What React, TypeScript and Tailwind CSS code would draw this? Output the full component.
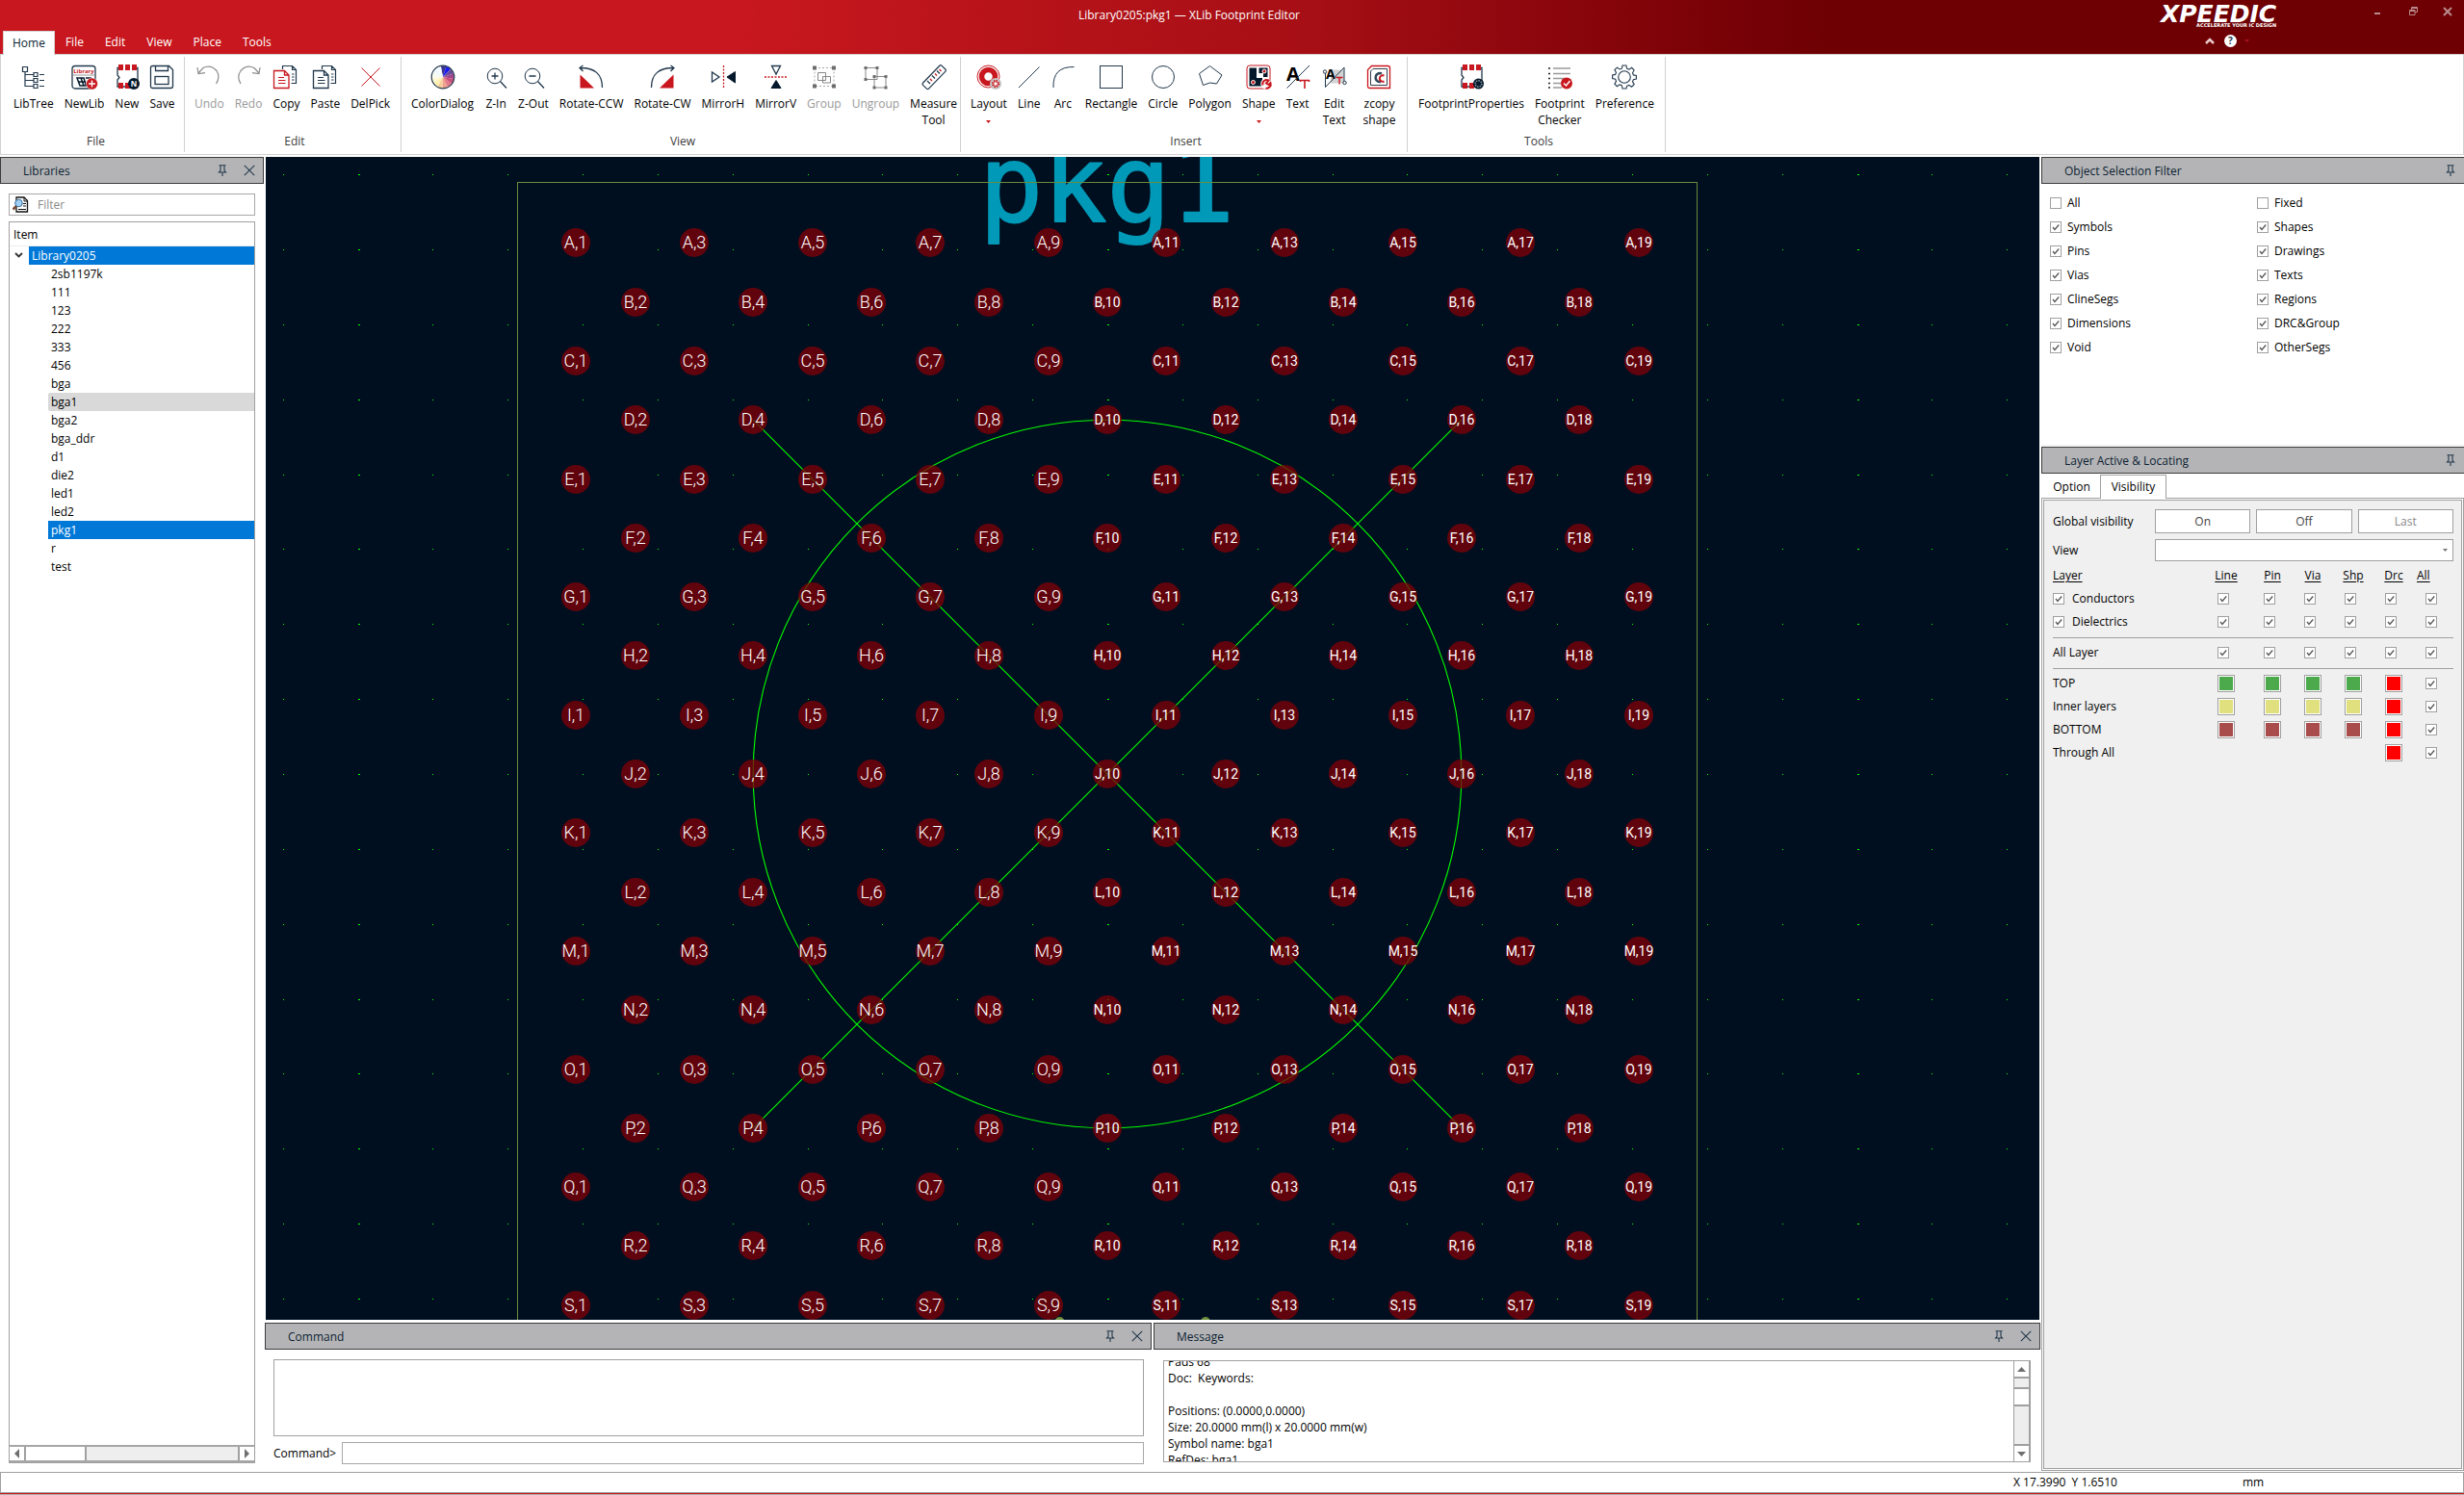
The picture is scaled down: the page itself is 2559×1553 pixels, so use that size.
import { useState } from 'react';
import type { ReactNode } from 'react';
import { clsx } from 'clsx';

const NAVY = '#22384c';
const DARK = '#04182b';
const RED = '#c8171e';

function Icon({ children }: { children: ReactNode }) {
  return (
    <svg viewBox="0 0 24 24" className="size-6 shrink-0 overflow-visible" fill="none" stroke={NAVY} strokeWidth="1">
      {children}
    </svg>
  );
}

function ChipBody() {
  return (
    <>
      <path d="M4 2.500H2V10l2 2.500-2 2.500V22h18M20 2.500h3V18" strokeWidth="1.300" />
      <g fill={RED} stroke="none">
        <rect x="3" y="-1" width="5" height="6" />
        <rect x="10" y="-1" width="5" height="6" />
        <rect x="17" y="-1" width="5" height="6" />
        <rect x="3" y="18" width="5" height="6" />
        <rect x="10" y="18" width="5" height="6" />
      </g>
    </>
  );
}

function CopyPages({ front }: { front: string }) {
  return (
    <>
      <path d="M8.500 4V.5h10l4 4v14h-5M18.500.5v4h4M18 9h2.500M18 12h2.500M18 15h2.500" strokeWidth="1.200" />
      <path d="M-.5 5.500h11l4.500 4.500v13.500H-.5ZM10.500 5.500V10H15" fill="#fff" stroke={front} strokeWidth="1.300" />
      <path d="M4 12.500h6M4 15.500h7.500M4 18.500h7.500" stroke={front} strokeWidth="1.200" />
    </>
  );
}

const wheel = ['#3b3590', '#1b1bf0', '#6a4b9c', '#a0468c', '#c84f7c', '#e07888', '#f0a08c', '#f6cf9c', '#fbeeb0', '#fdf8d0', '#f8faf0', '#f0f8fa', '#f4f8ff'];

function ColorWheel() {
  const step = (2 * Math.PI) / wheel.length;
  const at = (a: number) => `${12 + 11.5 * Math.sin(a)} ${12 - 11.5 * Math.cos(a)}`;
  return (
    <Icon>
      {wheel.map((color, i) => (
        <path
          key={color}
          d={`M12 12L${at((i - 0.4) * step)}A11.5 11.5 0 0 1 ${at((i + 0.6) * step)}Z`}
          fill={color}
          stroke="none"
        />
      ))}
      <circle cx="12" cy="12" r="11.8" strokeWidth="1.2" />
    </Icon>
  );
}

const icons: Record<string, ReactNode> = {
  LibTree: (
    <Icon>
      <path d="M.5 1.500h5v5h-5zM3 6.500V21.500h9M3 9.500h9M3 15.500h9M18 9.500h5M18 15.500h5M18 21.500h5" strokeWidth="1.200" />
      <path d="M12 7.500h4v4h-4zM12 13.500h4v4h-4zM12 19.500h4v4h-4z" fill="#fff" strokeWidth="1.200" />
    </Icon>
  ),
  NewLib: (
    <Icon>
      <rect x="0" y="0.500" width="24" height="23.500" rx="3" strokeWidth="1.300" />
      <text x="12" y="8" textAnchor="middle" fill={RED} stroke="none" className="font-['Open_Sans'] text-[6px] font-bold">
        Library
      </text>
      <path d="M.5 10h23" stroke="#999" />
      <path d="M5 13h7l2.500 8H8zM9 13l3 8M6 17h8M14 13h5v4" stroke={DARK} strokeWidth="1.500" />
      <circle cx="20.500" cy="19" r="6" fill={RED} stroke="#fff" strokeWidth=".5" />
      <path d="M17 19h7M20.500 15.500v7" stroke="#fff" strokeWidth="1.400" />
    </Icon>
  ),
  New: (
    <Icon>
      <ChipBody />
      <circle cx="19" cy="19" r="6" fill={DARK} stroke="none" />
      <text x="19" y="22" textAnchor="middle" fill="#fff" stroke="none" className="font-['Open_Sans'] text-[8px] font-bold">
        N
      </text>
    </Icon>
  ),
  Save: (
    <Icon>
      <path d="M2.500.5h17l4 4v17q0 2-2 2h-19q-2 0-2-2v-19q0-2 2-2zM5.500.5v5h13v-5" strokeWidth="1.300" />
      <rect x="5" y="11.500" width="14" height="8" strokeWidth="1.300" />
    </Icon>
  ),
  Undo: (
    <Icon>
      <path d="M19.500 19Q24 12 20 5.500 14-1.500 6 2.500L1 8M0 2l1 6.500 7-.8" stroke="#8d8d8d" strokeWidth="1.200" />
    </Icon>
  ),
  Redo: (
    <Icon>
      <path d="M4 19Q-.5 12 4 5.500 10-1.500 18 2.500l5 5.500M24 2l-1 6.500-7-.8" stroke="#8d8d8d" strokeWidth="1.200" />
    </Icon>
  ),
  Copy: (
    <Icon>
      <CopyPages front={RED} />
    </Icon>
  ),
  Paste: (
    <Icon>
      <CopyPages front={NAVY} />
    </Icon>
  ),
  DelPick: (
    <Icon>
      <path d="M2.500 2.500l19 19M21.500 2.500l-19 19" stroke={RED} />
    </Icon>
  ),
  ColorDialog: <ColorWheel />,
  'Z-In': (
    <Icon>
      <circle cx="11" cy="11" r="7.800" />
      <path d="M7.500 11h7M11 7.500v7M16.500 16.500l6.500 7" strokeWidth="1.300" />
    </Icon>
  ),
  'Z-Out': (
    <Icon>
      <circle cx="11" cy="11" r="7.800" />
      <path d="M7.500 11h7M16.500 16.500l6.500 7" strokeWidth="1.300" />
    </Icon>
  ),
  'Rotate-CCW': (
    <Icon>
      <path d="M0 2.500Q23.500 2 23.500 23M3.500 0L0 2.500 3.500 6" strokeWidth="1.300" />
      <path d="M.5 9.500V23.500H15z" fill={RED} stroke="none" />
    </Icon>
  ),
  'Rotate-CW': (
    <Icon>
      <path d="M24 2.500Q.5 2 .5 23M20.500 0L24 2.500 20.500 6" strokeWidth="1.300" />
      <path d="M23.500 9.500V23.500H9z" fill={RED} stroke="none" />
    </Icon>
  ),
  MirrorH: (
    <Icon>
      <path d="M12.500 0v24" stroke={RED} strokeDasharray="2 1.500" strokeWidth="1.300" />
      <path d="M.5 7v10L8 12z" strokeWidth="1.300" />
      <path d="M24.500 6.500v11.500L16 12z" fill={DARK} stroke={DARK} />
    </Icon>
  ),
  MirrorV: (
    <Icon>
      <path d="M0 12h24" stroke={RED} strokeDasharray="2 1.500" strokeWidth="1.300" />
      <path d="M7.500.5h9L12 9z" strokeWidth="1.300" />
      <path d="M7 23.500h10L12 15.500z" fill={DARK} stroke={DARK} />
    </Icon>
  ),
  Group: (
    <Icon>
      <path d="M2 2.500h20v19H2z" stroke="#a8a8a8" strokeDasharray="2 2" />
      <path d="M5.500 7.500h8v8h-8zM10.500 11.500h8v6.500h-8z" stroke="#888" />
      <path d="M0 .5h4v4H0zM20 .5h4v4h-4zM0 19.500h4v4H0zM20 19.500h4v4h-4z" fill="#6d6d6d" stroke="none" />
    </Icon>
  ),
  Ungroup: (
    <Icon>
      <path d="M2 2.500h12v12H2zM11 11.500h12v11.500H11z" stroke="#888" />
      <path d="M.5 1h3v3h-3zM12.500 1h3v3h-3zM.5 13h3v3h-3zM9.500 10h3v3h-3zM21.500 10h3v3h-3zM9.500 21.500h3v3h-3zM21.500 21.500h3v3h-3z" fill="#6d6d6d" stroke="none" />
    </Icon>
  ),
  'Measure Tool': (
    <Icon>
      <rect x="-2" y="8" width="28" height="8.500" rx="1.500" transform="rotate(-46 12 12)" strokeWidth="1.200" />
      <path d="M5 16l3 3M10 10.500l3 3M15 5.500l3 3" strokeWidth="1.300" />
      <path d="M8 14l2 2M13 8.500l2 2M17.500 4l2 2" stroke={RED} strokeWidth="1.300" />
    </Icon>
  ),
  Layout: (
    <Icon>
      <circle cx="11.500" cy="11.500" r="11.500" stroke={RED} />
      <circle cx="11.500" cy="11.500" r="7" stroke={RED} strokeWidth="5.500" />
      <circle cx="19" cy="19" r="6" fill="#c4c4c4" stroke="none" />
      <circle cx="19" cy="19" r="3.300" fill="#fff" stroke={RED} strokeWidth="1.500" strokeDasharray="1.600 1" />
      <circle cx="19" cy="19" r="2.300" stroke={RED} />
    </Icon>
  ),
  Line: (
    <Icon>
      <path d="M1 23L22.500 1.500" />
    </Icon>
  ),
  Arc: (
    <Icon>
      <path d="M2 23Q1 1 23.500 1.500" />
    </Icon>
  ),
  Rectangle: (
    <Icon>
      <rect x=".5" y=".5" width="23" height="23" />
    </Icon>
  ),
  Circle: (
    <Icon>
      <circle cx="12" cy="12" r="11.500" />
    </Icon>
  ),
  Polygon: (
    <Icon>
      <path d="M11.500.5L24 10l-5.500 9-7-1-7 2.500L.5 8.500z" />
    </Icon>
  ),
  Shape: (
    <Icon>
      <rect x="0" y="0" width="24" height="24" rx="3" stroke={RED} />
      <path d="M2.500 2.500H10V13h6v8.500H2.500zM12.500 2.500h9V12H17V8h-4.500z" fill={DARK} stroke="none" />
      <circle cx="6.500" cy="17.500" r="2" fill={RED} stroke="#fff" />
      <circle cx="18" cy="6" r="2" fill={RED} stroke="#fff" />
      <circle cx="20" cy="19" r="5.800" fill="#fff" stroke="none" />
      <path d="M16.500 20.500a4.200 4.200 0 0 1 6-5l-2.500 3 2.500 1.500 2-2a4.200 4.200 0 0 1-5 5.500" stroke={RED} strokeWidth="2" />
    </Icon>
  ),
  Text: (
    <Icon>
      <text x="0" y="16" fill="#000" stroke="none" className="font-['Open_Sans'] text-[20px] font-bold">
        A
      </text>
      <path d="M.5 23.500L24 0" />
      <path d="M14 15.500h10M19 15.500v8.500M14.500 15v2M23.500 15v2" stroke={RED} strokeWidth="1.600" />
    </Icon>
  ),
  'Edit Text': (
    <Icon>
      <path d="M8 4.500h14v14H8z" fill="#d2d2d2" stroke="none" />
      <text x="3" y="14" fill="#000" stroke="none" className="font-['Open_Sans'] text-[14px] font-bold">
        A
      </text>
      <path d="M2.500 8v14.500L22 2v15" />
      <path d="M13.500 12.500h7M17 12.500v7" stroke={RED} strokeWidth="1.400" />
      <circle cx="2" cy="6.500" r="1.700" fill="#fff" />
      <circle cx="22.500" cy="18" r="1.700" fill="#fff" />
    </Icon>
  ),
  'zcopy shape': (
    <Icon>
      <path d="M4.500.5h17q2 0 2 2v21H2.500q-2 0-2-2V4.500z" stroke={RED} strokeWidth="1.300" />
      <path d="M6 3.500h14.500v17H3.500V6z" stroke="#333f4c" />
      <path d="M15 8.500a4.500 4.500 0 1 0-1 8.500" stroke="#33475a" strokeWidth="2.500" />
      <path d="M17.500 10.500a3.300 3.300 0 1 0 0 6" stroke={RED} strokeWidth="2" />
    </Icon>
  ),
  FootprintProperties: (
    <Icon>
      <ChipBody />
      <circle cx="19.500" cy="19" r="5.500" fill={DARK} stroke="none" />
      <circle cx="19.500" cy="19" r="3.300" stroke="#8c99a5" strokeWidth="1.500" strokeDasharray="1.500 1" />
    </Icon>
  ),
  'Footprint Checker': (
    <Icon>
      <path d="M0 3h2M0 8.500h2M0 13.500h2M0 18.500h2M0 23h2" stroke="#222" strokeWidth="1.500" />
      <path d="M5 3h18M5 8.500h18M5 13.500h12M5 18.500h8M5 23h9" stroke="#9a9a9a" strokeWidth="1.500" />
      <circle cx="19" cy="18.500" r="6" fill={RED} stroke="none" />
      <path d="M16 18.500l2.500 2.500 4-5" stroke="#fff" strokeWidth="1.500" />
    </Icon>
  ),
  Preference: (
    <Icon>
      <circle cx="12" cy="12" r="6.300" strokeWidth="1.100" />
      <path d="M10 0h4l.6 3.200 2.200.9L19.600 2.300l2.500 2.600-1.600 2.800.9 2.200 3 .6v3.500l-3 .7-.9 2.200 1.700 2.700-2.700 2.600-2.700-1.800-2.200.9L14 24h-4l-.6-3.200-2.200-.9-2.800 1.800-2.500-2.600 1.600-2.700-.9-2.200-3-.7V10l3-.6.9-2.200L1.900 4.500l2.500-2.400 2.800 1.900 2.200-.8z" strokeWidth="1.100" />
    </Icon>
  ),
};

interface Tool {
  name: string;
  disabled?: boolean;
  menu?: boolean;
  wide?: boolean;
}

const ribbon: { title: string; width: string; tools: Tool[] }[] = [
  {
    title: 'File',
    width: 'w-[191px] pl-[7px]',
    tools: [{ name: 'LibTree' }, { name: 'NewLib' }, { name: 'New' }, { name: 'Save' }],
  },
  {
    title: 'Edit',
    width: 'w-[225px] pl-1',
    tools: [
      { name: 'Undo', disabled: true },
      { name: 'Redo', disabled: true },
      { name: 'Copy' },
      { name: 'Paste' },
      { name: 'DelPick' },
    ],
  },
  {
    title: 'View',
    width: 'w-[581px] pl-1',
    tools: [
      { name: 'ColorDialog' },
      { name: 'Z-In' },
      { name: 'Z-Out' },
      { name: 'Rotate-CCW' },
      { name: 'Rotate-CW' },
      { name: 'MirrorH' },
      { name: 'MirrorV' },
      { name: 'Group', disabled: true },
      { name: 'Ungroup', disabled: true },
      { name: 'Measure Tool' },
    ],
  },
  {
    title: 'Insert',
    width: 'w-[464px] pl-1',
    tools: [
      { name: 'Layout', menu: true },
      { name: 'Line' },
      { name: 'Arc' },
      { name: 'Rectangle' },
      { name: 'Circle' },
      { name: 'Polygon' },
      { name: 'Shape', menu: true },
      { name: 'Text' },
      { name: 'Edit Text', wide: true },
      { name: 'zcopy shape', wide: true },
    ],
  },
  {
    title: 'Tools',
    width: 'w-[268px] pl-[5px]',
    tools: [{ name: 'FootprintProperties' }, { name: 'Footprint Checker' }, { name: 'Preference' }],
  },
];

const libraryItems = [
  '2sb1197k', '111', '123', '222', '333', '456', 'bga', 'bga1', 'bga2', 'bga_ddr',
  'd1', 'die2', 'led1', 'led2', 'pkg1', 'r', 'test',
];

const filters = [
  ['All', 'Fixed'],
  ['Symbols', 'Shapes'],
  ['Pins', 'Drawings'],
  ['Vias', 'Texts'],
  ['ClineSegs', 'Regions'],
  ['Dimensions', 'DRC&Group'],
  ['Void', 'OtherSegs'],
];

const layerColumns = ['Line', 'Pin', 'Via', 'Shp', 'Drc'];

const layers = [
  { name: 'TOP', color: 'bg-[#4caa4c]' },
  { name: 'Inner layers', color: 'bg-[#e0e07e]' },
  { name: 'BOTTOM', color: 'bg-[#a84c4c]' },
  { name: 'Through All', color: null },
];

function CheckBox({ id, label, checked = true }: { id?: string; label?: string; checked?: boolean }) {
  return (
    <span className="relative inline-flex size-3 shrink-0 align-middle">
      <input
        id={id}
        type="checkbox"
        aria-label={label}
        defaultChecked={checked}
        className="peer size-3 appearance-none border border-[#a0a0a0] bg-white"
      />
      <svg viewBox="0 0 12 12" className="pointer-events-none absolute inset-0 hidden size-3 peer-checked:block">
        <path d="M3 6l2 2.500L9.200 3.500" fill="none" stroke="#555" strokeWidth="1.300" />
      </svg>
    </span>
  );
}

function DockHeader({ title, closable = false, flush = false }: { title: string; closable?: boolean; flush?: boolean }) {
  return (
    <div
      className={clsx(
        'flex h-7 shrink-0 items-center border border-[#3c3c3c] bg-[#b4b4b6] pr-2 pl-[23px] text-[#0c1f33]',
        flush && 'border-r-0',
      )}
    >
      <h2 className="flex-1 pt-0.5">{title}</h2>
      <div className="flex items-center gap-4">
        <button type="button" aria-label={`Pin ${title}`}>
          <svg viewBox="0 0 12 12" className="size-3" fill="none" stroke={NAVY} strokeWidth="1.100">
            <path d="M2.500.8h7M4 1v5.500M8 1v5.500M4 6.500L2.500 8h7L8 6.500M6 8v4" />
          </svg>
        </button>
        {closable && (
          <button type="button" aria-label={`Close ${title}`}>
            <svg viewBox="0 0 12 12" className="size-3" fill="none" stroke={NAVY} strokeWidth="1.100">
              <path d="M.8.8l10.400 10.400M11.200.8L.8 11.200" />
            </svg>
          </button>
        )}
      </div>
    </div>
  );
}

function TitleBar() {
  return (
    <header className="h-14 shrink-0 bg-linear-to-r from-[#c8171e] from-30% via-[#a60f15] via-53% to-[#6e0004] to-74% text-white">
      <div className="grid h-8 grid-cols-[226px_1fr_315px]">
        <div />
        <h1 className="text-center leading-8">Library0205:pkg1 — XLib Footprint Editor</h1>
        <div className="flex items-start justify-between pr-3">
          <div className="flex flex-col items-end font-['DejaVu_Sans'] font-bold">
            <span className="-mb-1.5 text-[25px] leading-[29px] italic">XPEEDIC</span>
            <span className="text-[5px] leading-[6px]">ACCELERATE YOUR IC DESIGN</span>
          </div>
          <div className="flex gap-[26px] pt-[7px] text-[#b98a8c]">
            <button type="button" aria-label="Minimize">
              <svg viewBox="0 0 10 10" className="size-[10px]"><path d="M1 6h6v2H1z" fill="currentColor" /></svg>
            </button>
            <button type="button" aria-label="Restore">
              <svg viewBox="0 0 10 10" className="size-[10px]" fill="none" stroke="currentColor">
                <path d="M3.500 3V.5h6v5H7M3 1.500h7M1.500 3.500h5.500v5h-5.500zM1 4.500h6" />
              </svg>
            </button>
            <button type="button" aria-label="Close">
              <svg viewBox="0 0 10 10" className="size-[10px]"><path d="M1 1l8 8M9 1L1 9" stroke="currentColor" strokeWidth="2" /></svg>
            </button>
          </div>
        </div>
      </div>
      <div className="flex h-6 items-start justify-between">
        <nav className="flex pl-[3px]">
          {['Home', 'File', 'Edit', 'View', 'Place', 'Tools'].map((tab) => (
            <button
              key={tab}
              type="button"
              className={clsx(
                'relative',
                tab === 'Home' ? 'h-[25px] border border-b-0 border-[#d4d4d4] bg-white px-[9px] text-[#0c1f33]' : 'h-6 px-[11px]',
              )}
            >
              {tab}
            </button>
          ))}
        </nav>
        <div className="flex items-center gap-2 pt-1 pr-[223px]">
          <button type="button" aria-label="Collapse ribbon" className="pr-0.5">
            <svg viewBox="0 0 10 8" className="h-2 w-[10px]">
              <path d="M1 6l4-4 4 4" fill="none" stroke="#e8c8c8" strokeWidth="2.500" />
            </svg>
          </button>
          <button type="button" aria-label="Help" className="size-[13px] rounded-full bg-white text-[10px] leading-[13px] font-bold text-[#22384c]">
            ?
          </button>
          <svg viewBox="0 0 5 3" className="h-[3px] w-[5px]"><path d="M0 0h5L2.500 3z" fill="#a8121a" /></svg>
        </div>
      </div>
    </header>
  );
}

function Ribbon() {
  return (
    <div className="flex h-[105px] shrink-0 border border-[#d0d0d0] bg-white">
      {ribbon.map((group) => (
        <section key={group.title} className={clsx('my-0.5 flex shrink-0 flex-col border-r border-[#d0d0d0]', group.width)}>
          <div className="flex flex-1 items-start pt-[9px]">
            {group.tools.map((tool) => {
              const words = tool.name.split(' ');
              return (
                <button
                  key={tool.name}
                  type="button"
                  disabled={tool.disabled}
                  className={clsx(
                    'flex shrink-0 flex-col items-center leading-[17px] text-black disabled:text-[#999]',
                    tool.wide ? 'px-[9px]' : 'pr-[5px] pl-[6px]',
                  )}
                >
                  {icons[tool.name]}
                  <span className="mt-[7px]">{words[0]}</span>
                  {words[1] && <span>{words[1]}</span>}
                  {tool.menu && (
                    <svg viewBox="0 0 5 3" className="mt-[9px] h-[3px] w-[5px]"><path d="M0 0h5L2.500 3z" fill={RED} /></svg>
                  )}
                </button>
              );
            })}
          </div>
          <h3 className="pb-0.5 text-center leading-[18px] text-[#3c3c3c]">{group.title}</h3>
        </section>
      ))}
    </div>
  );
}

function LibraryPanel() {
  const [selected, setSelected] = useState('pkg1');

  return (
    <aside className="flex w-[274px] shrink-0 flex-col">
      <DockHeader title="Libraries" closable />
      <div className="flex min-h-0 flex-1 flex-col gap-[6px] px-[9px] pt-[10px] pb-[9px]">
        <label className="flex h-[23px] items-center gap-[9px] border border-[#a8a8a8] pl-[3px]">
          <svg viewBox="0 0 17 17" className="size-[17px]" fill="none">
            <path d="M4 1h8l3.500 3.500v11.500H4z" fill="#fff" stroke="#111" strokeWidth="1.300" />
            <path d="M12 1v4h4M11 7.500h3M11 10h3M6 13.500h8" stroke="#111" />
            <path d="M4 10l-3.500 3.500" stroke="#7a4a32" strokeWidth="2.500" />
            <circle cx="6.500" cy="7" r="3.800" fill="#9fd0f5" stroke="#3d6a96" />
          </svg>
          <input type="text" aria-label="Filter" placeholder="Filter" className="min-w-0 flex-1 outline-none placeholder:text-[#8a8a8a]" />
        </label>

        <div className="flex min-h-0 flex-1 flex-col border border-[#a0a0a0]">
          <div className="h-[25px] shrink-0 border-b border-[#ececec] pl-1 leading-[26px] text-black">Item</div>
          <ul className="flex-1 leading-[19px] text-black">
            <li>
              <div className="flex h-[19px]">
                <svg viewBox="0 0 20 19" className="h-[19px] w-5">
                  <path d="M6 7l3.500 3.500L13 7" fill="none" stroke="#333" strokeWidth="1.800" />
                </svg>
                <span className="flex-1 bg-[#0078d7] pl-[3px] text-white">Library0205</span>
              </div>
              <ul className="pl-10">
                {libraryItems.map((item) => (
                  <li key={item}>
                    <button
                      type="button"
                      onClick={() => setSelected(item)}
                      className={clsx(
                        'block h-[19px] w-full pl-[3px] text-left',
                        item === selected && 'bg-[#0078d7] text-white',
                        item === 'bga1' && item !== selected && 'rounded-l-xs bg-[#d9d9d9]',
                      )}
                    >
                      {item}
                    </button>
                  </li>
                ))}
              </ul>
            </li>
          </ul>
          <div className="flex h-[18px] shrink-0 border-y-2 border-[#a6a6a6] bg-[#eee]">
            <button type="button" aria-label="Scroll left" className="flex w-[17px] items-center justify-center border-r-2 border-[#a0a0a0] bg-white">
              <svg viewBox="0 0 5 10" className="h-[10px] w-[5px]"><path d="M5 0v10L0 5z" fill="#6f6f6f" /></svg>
            </button>
            <div className="w-[63px] border-r-2 border-[#a0a0a0] bg-white" />
            <div className="flex-1" />
            <button type="button" aria-label="Scroll right" className="flex w-[17px] items-center justify-center border-l-2 border-[#a0a0a0] bg-white">
              <svg viewBox="0 0 5 10" className="h-[10px] w-[5px]"><path d="M0 0v10l5-5z" fill="#6f6f6f" /></svg>
            </button>
          </div>
        </div>
      </div>
    </aside>
  );
}

const PITCH = 61.3;
const GRID = 77.85;

const range = (from: number, to: number) => Array.from({ length: to - from + 1 }, (_, i) => from + i);

const pins = range(1, 19).flatMap((row) =>
  range(1, 19)
    .filter((col) => (row + col) % 2 === 0)
    .map((col) => ({
      label: `${String.fromCharCode(64 + row)},${col}`,
      x: Math.round((col - 10) * PITCH),
      y: Math.round((row - 10) * PITCH),
      small: col > 9,
    })),
);

// Origin of the drawing is the package centre (pin J,10)
function FootprintCanvas() {
  const reach = PITCH * 6;
  return (
    <div className="mx-px mb-[3px] min-h-0 flex-1 overflow-hidden bg-[#000f1f]">
      <svg viewBox="-874 -641 1842 1208" preserveAspectRatio="xMidYMid slice" className="block size-full">
        <g fill="#00ff00" shapeRendering="crispEdges">
          {range(-8, 7).flatMap((row) =>
            range(-11, 12).map((col) => (
              <rect
                key={`${row}/${col}`}
                x={Math.round(col * GRID)}
                y={Math.round(row * GRID)}
                width={col % 10 === 0 ? 2 : 1}
                height="1"
              />
            )),
          )}
        </g>
        <text
          x="-133"
          y="-574"
          fill="#0099b8"
          stroke="#0099b8"
          strokeWidth="2"
          strokeLinejoin="round"
          className="font-['DejaVu_Sans_Mono'] text-[110px]"
        >
          pkg1
        </text>
        <rect x="-612.5" y="-614.500" width="1225" height="1225" fill="none" stroke="#6a8c3c" />
        <g fill="#6a8c3c">
          <circle cx="-49.500" cy="569" r="5" />
          <circle cx="102" cy="569" r="5" />
        </g>
        <g fill="none" stroke="#00ff00" strokeWidth="1.100">
          <circle cx="0" cy="0" r={reach} />
          <path d={`M${-reach} ${-reach}L${reach} ${reach}M${reach} ${-reach}L${-reach} ${reach}`} />
        </g>
        <g fill="#7f0008" fillOpacity=".76">
          {pins.map((pin) => (
            <circle key={pin.label} cx={pin.x} cy={pin.y} r="15" />
          ))}
        </g>
        <g fill="#fff" textAnchor="middle" className="font-['Roboto']">
          {pins.map((pin) => (
            <text
              key={pin.label}
              x={pin.x}
              y={pin.y + (pin.small ? 5 : 6)}
              className={pin.small ? 'text-[14px] font-normal' : 'text-[18px] font-light'}
            >
              {pin.label}
            </text>
          ))}
        </g>
      </svg>
    </div>
  );
}

function CommandPanel() {
  return (
    <section className="flex min-w-0 flex-1 flex-col">
      <DockHeader title="Command" closable />
      <div className="flex flex-1 flex-col gap-[6px] pt-[10px] pr-2 pb-2 pl-[9px]">
        <textarea aria-label="Command history" readOnly className="flex-1 resize-none border border-[#a0a0a0] bg-white outline-none" />
        <div className="flex h-[23px] items-center gap-[6px]">
          <label htmlFor="command" className="text-black">Command&gt;</label>
          <input id="command" type="text" className="h-full flex-1 border border-[#a8a8a8] px-1 outline-none" />
        </div>
      </div>
    </section>
  );
}

function MessagePanel() {
  return (
    <section className="flex min-w-0 flex-1 flex-col">
      <DockHeader title="Message" closable />
      <div className="flex min-h-0 flex-1 px-[10px] pt-[11px] pb-[9px]">
        <div className="flex h-[106px] flex-1 overflow-hidden border border-[#a0a0a0]">
          <pre className="-mt-2 flex-1 pl-1 font-['Open_Sans',sans-serif] leading-[17px] text-black">
            {[
              'Pads 68',
              'Doc:  Keywords:',
              ' ',
              'Positions: (0.0000,0.0000)',
              'Size: 20.0000 mm(l) x 20.0000 mm(w)',
              'Symbol name: bga1',
              'RefDes: bga1',
            ].join('\n')}
          </pre>
          <div className="flex w-[17px] flex-col border-x border-[#a0a0a0] bg-[#eee]">
            <button type="button" aria-label="Scroll up" className="flex h-[18px] items-center justify-center border-b-2 border-[#a0a0a0] bg-white">
              <svg viewBox="0 0 9 5" className="h-[5px] w-[9px]"><path d="M0 5h9L4.500 0z" fill="#6f6f6f" /></svg>
            </button>
            <div className="mt-[9px] h-5 border-y-2 border-[#a0a0a0] bg-white" />
            <div className="flex-1" />
            <button type="button" aria-label="Scroll down" className="flex h-[18px] items-center justify-center border-t-2 border-[#a0a0a0] bg-white">
              <svg viewBox="0 0 9 5" className="h-[5px] w-[9px]"><path d="M0 0h9L4.500 5z" fill="#6f6f6f" /></svg>
            </button>
          </div>
        </div>
      </div>
    </section>
  );
}

function SelectionFilter() {
  return (
    <section className="h-[300px] border-b border-[#ececec]">
      <DockHeader title="Object Selection Filter" flush />
      <div className="grid grid-cols-2 pt-[7px] pl-[9px] text-black">
        {filters.flat().map((name) => (
          <label key={name} className="flex h-[25px] items-center gap-[6px]">
            <CheckBox checked={name !== 'All' && name !== 'Fixed'} />
            {name}
          </label>
        ))}
      </div>
    </section>
  );
}

function Swatch({ color, label }: { color: string; label: string }) {
  return (
    <button type="button" aria-label={label} className="block size-[18px] border border-[#a0a0a0] bg-white p-px">
      <span className={clsx('block size-full', color)} />
    </button>
  );
}

function CheckCells({ row }: { row: string }) {
  return (
    <>
      {layerColumns.map((col) => (
        <td key={col}>
          <div className="flex"><CheckBox label={`${row} ${col}`} /></div>
        </td>
      ))}
      <td className="pl-[9px]">
        <div className="flex"><CheckBox label={`${row} All`} /></div>
      </td>
    </>
  );
}

function Divider() {
  return (
    <tr>
      <td colSpan={7} className="h-2">
        <hr className="border-[#a0a0a0]" />
      </td>
    </tr>
  );
}

function VisibilityTable() {
  return (
    <table className="mt-[3px] w-full table-fixed border-collapse text-left text-black">
      <colgroup>
        <col />
        <col className="w-12" />
        <col className="w-[42px]" />
        <col className="w-[42px]" />
        <col className="w-[42px]" />
        <col className="w-[33px]" />
        <col className="w-[38px]" />
      </colgroup>
      <thead>
        <tr className="h-6">
          <th className="font-normal underline underline-offset-2">Layer</th>
          {layerColumns.map((col) => (
            <th key={col} className="font-normal underline underline-offset-2">
              <div className="flex w-[18px] justify-center">{col}</div>
            </th>
          ))}
          <th className="font-normal underline underline-offset-2">All</th>
        </tr>
      </thead>
      <tbody>
        {['Conductors', 'Dielectrics'].map((name) => (
          <tr key={name} className="h-6">
            <td>
              <label className="flex items-center gap-2">
                <CheckBox />
                {name}
              </label>
            </td>
            <CheckCells row={name} />
          </tr>
        ))}
        <Divider />
        <tr className="h-6">
          <td>All Layer</td>
          <CheckCells row="All Layer" />
        </tr>
        <Divider />
        {layers.map((layer) => (
          <tr key={layer.name} className="h-6">
            <td>{layer.name}</td>
            {layerColumns.map((col) => {
              const color = col === 'Drc' ? 'bg-[#ff0000]' : layer.color;
              return <td key={col}>{color && <Swatch color={color} label={`${layer.name} ${col}`} />}</td>;
            })}
            <td className="pl-[9px]">
              <div className="flex"><CheckBox label={`${layer.name} All`} /></div>
            </td>
          </tr>
        ))}
      </tbody>
    </table>
  );
}

function LayerPanel() {
  return (
    <section className="mt-px flex min-h-0 flex-1 flex-col">
      <DockHeader title="Layer Active & Locating" flush />
      <div className="flex h-[25px] shrink-0 items-start pt-px text-black">
        <button type="button" className="h-[25px] w-[61px] pr-0.5 pl-1">Option</button>
        <button type="button" className="relative h-[25px] w-[69px] border border-b-0 border-[#a0a0a0] bg-white">Visibility</button>
      </div>
      <div className="flex-1 border border-[#a0a0a0] bg-white p-px">
        <div className="h-full border border-[#a0a0a0] bg-[#f0f0f0] pt-[9px] pr-2 pl-[9px]">
          <div className="grid grid-cols-[100px_1fr_1fr_1fr] items-center gap-x-[6px]">
            <span className="text-black">Global visibility</span>
            {['On', 'Off', 'Last'].map((name) => (
              <button
                key={name}
                type="button"
                disabled={name === 'Last'}
                className="h-[25px] border border-[#a0a0a0] bg-white text-[#444] disabled:text-[#888]"
              >
                {name}
              </button>
            ))}
          </div>
          <div className="mt-[6px] flex items-center">
            <label htmlFor="view" className="w-[106px] text-black">View</label>
            <div className="relative flex-1">
              <select id="view" className="block h-[23px] w-full appearance-none border border-[#a0a0a0] bg-white">
                <option />
              </select>
              <svg viewBox="0 0 5 3" className="pointer-events-none absolute top-[10px] right-[6px] h-[3px] w-[5px]">
                <path d="M0 0h5L2.500 3z" fill="#777" />
              </svg>
            </div>
          </div>
          <VisibilityTable />
        </div>
      </div>
    </section>
  );
}

export default function App() {
  return (
    <div className="flex h-screen w-full flex-col overflow-hidden bg-white font-['Open_Sans',sans-serif] text-[12px]">
      <TitleBar />
      <Ribbon />
      <main className="flex min-h-0 flex-1 pt-0.5">
        <LibraryPanel />
        <div className="ml-px flex min-w-0 flex-1 flex-col">
          <FootprintCanvas />
          <div className="flex h-[155px] shrink-0 gap-0.5">
            <CommandPanel />
            <MessagePanel />
          </div>
        </div>
        <aside className="ml-px flex w-[439px] shrink-0 flex-col pb-px">
          <SelectionFilter />
          <LayerPanel />
        </aside>
      </main>
      <footer className="flex h-6 shrink-0 flex-col">
        <div className="flex flex-1 items-center justify-end border border-[#a0a0a0] bg-white text-black">
          <span className="w-[238px] whitespace-pre">X 17.3990  Y 1.6510</span>
          <span className="w-[229px]">mm</span>
        </div>
        <div className="h-0.5 border-b border-[#b0b0b0] bg-[#c8171e]" />
      </footer>
    </div>
  );
}
